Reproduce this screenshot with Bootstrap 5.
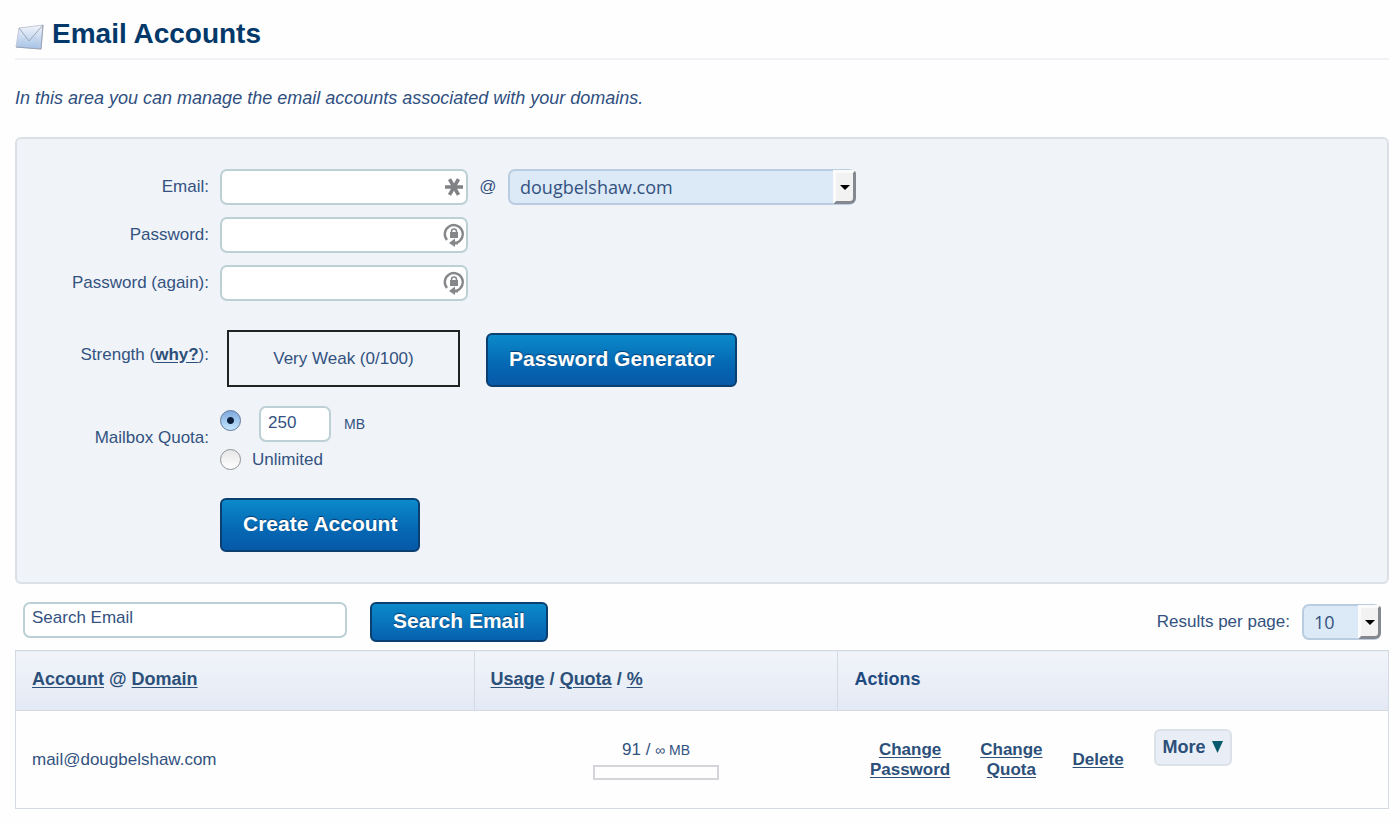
<!DOCTYPE html>
<html lang="en">
<head>
<meta charset="utf-8">
<meta name="viewport" content="width=device-width, initial-scale=1">
<title>Email Accounts</title>
<link href="https://cdn.jsdelivr.net/npm/bootstrap@5.3.0/dist/css/bootstrap.min.css" rel="stylesheet">
<style>
  body { font-family: "Liberation Sans", Arial, sans-serif; font-size: 17px; line-height: 20px; color: #33527f; background: #fefefe; }
  main { padding: 16px 11px 14px 15px; }
  a { color: #2c5079; font-weight: bold; text-underline-offset: 2px; }
  .page-head { height: 44px; border-bottom: 2px solid #f0f2f5; }
  .page-head h1 { font-size: 28px; line-height: 36px; font-weight: bold; color: #03396a; }
  .intro { font-size: 18px; font-style: italic; line-height: 20px; margin: 28px 0 29px; color: #2f4f80; }
  .panel { background: #f0f4f9; border: 2px solid #dbe0e7; border-radius: 6px; padding: 30px 16px 30px 0; }
  .field-label { width: 192px; flex: none; text-align: right; }
  .field-row { display: flex; gap: 11px; align-items: center; margin-bottom: 12px; }
  .field { height: 36px; border: 2px solid #bcd0d6; border-radius: 7px; padding: 0 7px 2px; color: #33527f; font-size: 17px; line-height: 20px; background-color: #fff; }
  .field-box { width: 248px; position: relative; }
  .field-box svg { position: absolute; right: 3px; top: 6px; }
  .lock-icon { fill: none; stroke: #85878a; }
  .row-strength { margin-top: 29px; margin-bottom: 19px; }
  .row-quota { margin-bottom: 28px; }
  .at-sign { width: 18px; text-align: center; }
  .pick { height: 36px; border: 2px solid #bacde0; border-radius: 7px; background: #dce9f7; color: #33527f; font-family: "Open Sans", sans-serif; font-size: 18px; line-height: 28px; padding: 0 10px; appearance: none; width: 100%; display: block; }
  .pick-wrap { position: relative; flex: none; }
  .pick-domain { width: 348px; }
  .pick-count { width: 79px; }
  .pick-arrow { position: absolute; right: 0; top: 1px; width: 23px; height: 34px; background: #f2f2f2; border: 3px solid; border-color: #fbfbfb #85888e #85888e #fbfbfb; border-bottom-right-radius: 6px; border-top-right-radius: 4px; pointer-events: none; display: flex; align-items: center; justify-content: center; }
  .pick-arrow::after { content: ""; border: 5px solid transparent; border-top-color: #000; border-bottom-width: 0; }
  .strength { width: 233px; height: 57px; border: 2px solid #222; margin: 0 15px 0 7px; }
  .action { font-size: 21px; line-height: 26px; font-weight: bold; color: #fff; border: 2px solid #0b3f70; border-radius: 6px; padding: 11px 21px 13px; background: linear-gradient(#0b8acb, #0567b3 60%, #0759a8); text-shadow: 0 -1px 1px #0a3d70; }
  .action-low { padding: 4px 21px 6px; background: linear-gradient(#0b8acb, #0660ae); }
  .choice { appearance: none; flex: none; width: 21px; height: 21px; margin: 0; border: 1px solid #8f9296; border-radius: 50%; background: linear-gradient(#e6e6e6, #fff); }
  .choice:checked { border-color: #5e7699; background: radial-gradient(circle, #0c1f3a 3px, transparent 4px), linear-gradient(#7fa9dd, #c4e7ff); }
  .quota-size { width: 72px; margin: 0 13px 0 18px; }
  .quota-free { gap: 11px; margin-top: 7px; }
  .unit { font-size: 14px; }
  .tools { padding: 18px 8px 8px; }
  .tools .search-text { width: 324px; margin-right: 23px; padding-bottom: 4px; }
  .per-page { gap: 12px; padding-top: 2px; }
  .grid-table { width: 100%; table-layout: fixed; border: 1px solid #d3dae1; border-collapse: collapse; }
  .grid-table th { height: 60px; font-size: 18px; padding: 0 16px 3px; background: linear-gradient(#f1f4f9, #e3e9f5); border: 1px solid #d3dae1; color: #2c5079; }
  .grid-table th:last-child { color: #1f4a80; }
  .grid-table tbody tr { height: 98px; }
  .grid-table td { padding: 0 16px; }
  .col-account { width: 33.4%; }
  .col-usage { width: 26.5%; }
  .meter { width: 126px; height: 15px; border: 2px solid #d3d5d8; margin: 5px auto 0; }
  .acts { gap: 30px; padding-left: 16px; }
  .acts a { text-align: center; }
  .more { height: 37px; font-size: 18px; font-weight: bold; color: #2c5079; background: #e9eef6; border: 2px solid #dbe1e9; border-radius: 6px; padding: 0 7px 2px; margin-bottom: 24px; display: flex; align-items: center; gap: 6px; }
</style>
</head>
<body>
<main>
  <header class="page-head d-flex align-items-start gap-2">
    <svg width="29" height="27" viewBox="0 0 29 27" class="mt-2" aria-hidden="true">
      <defs><linearGradient id="env" x1="0" y1="0" x2="0" y2="1"><stop offset="0" stop-color="#f3f5fa"/><stop offset="1" stop-color="#a3c2e8"/></linearGradient></defs>
      <path d="M4 4 28 1 26 25 1 23z" fill="url(#env)" stroke="#c3c9d5"/>
      <path d="M1 23 11 14M26 25 19 13" fill="none" stroke="#c2cde0"/>
      <path d="M4 4 14 17 28 1" fill="none" stroke="#9ba6b8"/>
      <path d="M28 1 26 25 1 23" fill="none" stroke="#98a3b6"/>
    </svg>
    <h1 class="m-0">Email Accounts</h1>
  </header>
  <p class="intro">In this area you can manage the email accounts associated with your domains.</p>

  <form class="panel">
    <div class="field-row">
      <label class="field-label" for="email">Email:</label>
      <div class="field-box">
        <input class="field w-100 d-block" id="email" type="text">
        <svg width="22" height="24" viewBox="0 0 22 24" aria-hidden="true"><path d="M2 12H20M6.500 4.200 15.500 19.800M15.500 4.200 6.500 19.800" stroke="#808285" stroke-width="3.600"/></svg>
      </div>
      <span class="at-sign">@</span>
      <div class="pick-wrap pick-domain">
        <select class="pick" aria-label="Domain"><option>dougbelshaw.com</option></select><span class="pick-arrow"></span>
      </div>
    </div>
    <div class="field-row">
      <label class="field-label" for="pw">Password:</label>
      <div class="field-box">
        <input class="field w-100 d-block" id="pw" type="password">
        <svg class="lock-icon" width="22" height="24" viewBox="0 0 22 24" aria-hidden="true"><path d="M4 17A9 9 0 1 1 14 19.500" stroke-width="2.400"/><path d="M6 20 12 15.500V18.500H15V21.500H12V24z" fill="#85878a" stroke="none"/><path d="M8.500 10V8.500a2.500 2.500 0 0 1 5 0V10" stroke-width="1.500"/><path d="M7 9H15V15H7z" fill="#85878a" stroke="none"/></svg>
      </div>
    </div>
    <div class="field-row">
      <label class="field-label" for="pw2">Password (again):</label>
      <div class="field-box">
        <input class="field w-100 d-block" id="pw2" type="password">
        <svg class="lock-icon" width="22" height="24" viewBox="0 0 22 24" aria-hidden="true"><path d="M4 17A9 9 0 1 1 14 19.500" stroke-width="2.400"/><path d="M6 20 12 15.500V18.500H15V21.500H12V24z" fill="#85878a" stroke="none"/><path d="M8.500 10V8.500a2.500 2.500 0 0 1 5 0V10" stroke-width="1.500"/><path d="M7 9H15V15H7z" fill="#85878a" stroke="none"/></svg>
      </div>
    </div>
    <div class="field-row row-strength">
      <span class="field-label pb-2">Strength (<a href="#">why?</a>):</span>
      <div class="strength d-flex align-items-center justify-content-center">Very Weak (0/100)</div>
      <button type="button" class="action align-self-end">Password Generator</button>
    </div>
    <div class="field-row row-quota">
      <span class="field-label">Mailbox Quota:</span>
      <div>
        <div class="d-flex align-items-center">
          <input class="choice mb-2" type="radio" name="quota" id="q1" aria-label="Limited quota" checked>
          <input class="field quota-size" type="text" value="250" aria-label="Quota in megabytes">
          <label class="unit" for="q1">MB</label>
        </div>
        <div class="quota-free d-flex align-items-center">
          <input class="choice" type="radio" name="quota" id="q2">
          <label for="q2">Unlimited</label>
        </div>
      </div>
    </div>
    <div class="field-row mb-0">
      <span class="field-label"></span>
      <button type="submit" class="action">Create Account</button>
    </div>
  </form>

  <div class="tools d-flex align-items-start">
    <input class="field search-text" type="text" value="Search Email" aria-label="Search Email">
    <button type="button" class="action action-low">Search Email</button>
    <div class="per-page d-flex align-items-center ms-auto">
      <label for="per">Results per page:</label>
      <div class="pick-wrap pick-count"><select class="pick" id="per"><option>10</option></select><span class="pick-arrow"></span></div>
    </div>
  </div>

  <table class="grid-table">
    <colgroup><col class="col-account"><col class="col-usage"><col></colgroup>
    <thead>
      <tr><th><a href="#">Account</a> @ <a href="#">Domain</a></th><th><a href="#">Usage</a> / <a href="#">Quota</a> / <a href="#">%</a></th><th>Actions</th></tr>
    </thead>
    <tbody>
      <tr>
        <td>mail@dougbelshaw.com</td>
        <td class="text-center">91 / <span class="unit">∞ MB</span><div class="meter"></div></td>
        <td>
          <div class="acts d-flex align-items-center">
            <a href="#">Change<br>Password</a><a href="#">Change<br>Quota</a><a href="#">Delete</a>
            <button type="button" class="more">More <svg width="11" height="12" viewBox="0 0 11 12" aria-hidden="true"><path d="M0 0H11L5.500 12z" fill="#075b6c"/></svg></button>
          </div>
        </td>
      </tr>
    </tbody>
  </table>
</main>
<script src="https://cdn.jsdelivr.net/npm/bootstrap@5.3.0/dist/js/bootstrap.bundle.min.js"></script>
</body>
</html>
